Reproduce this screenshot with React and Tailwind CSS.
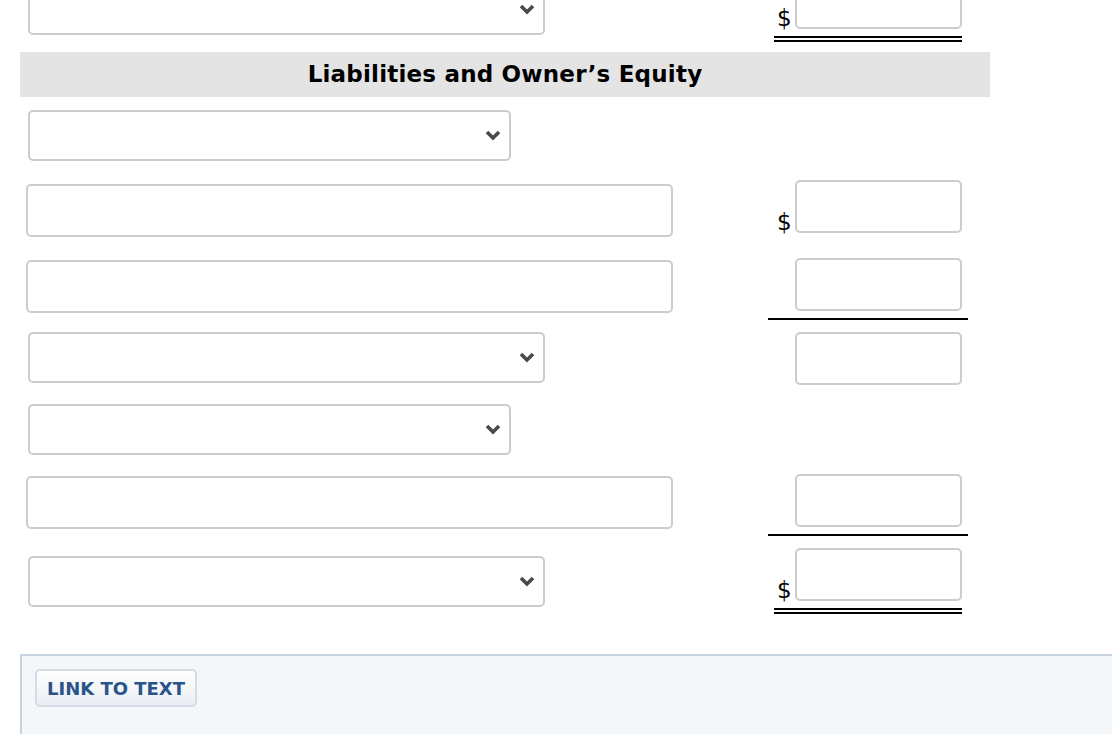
import React from "react";

const Chevron = () => (
  <svg width="16" height="11" viewBox="0 0 16 11" className="block">
    <polyline points="2,2 8,8 14,2" fill="none" stroke="#4a4a4a" strokeWidth="3.6" />
  </svg>
);

const Select = ({ wide, className = "" }) => (
  <div
    className={`flex h-[51px] items-center justify-end rounded-[5px] border-2 border-[#cccccc] bg-white pr-[8px] ${
      wide ? "w-[517px]" : "w-[483px]"
    } ${className}`}
  >
    <Chevron />
  </div>
);

const TextBox = ({ className = "" }) => (
  <div className={`h-[53px] w-[647px] rounded-[5px] border-2 border-[#cccccc] bg-white ${className}`} />
);

const Amount = ({ dollar }) => (
  <div className="flex items-end">
    <div className="mb-[-1px] w-[27px] pl-[9px] text-[23px] leading-[23px] text-black">
      {dollar ? "$" : ""}
    </div>
    <div className="h-[53px] w-[167px] rounded-[5px] border-2 border-[#cccccc] bg-white" />
  </div>
);

const DoubleLine = () => <div className="ml-[6px] mt-[7px] h-[6px] w-[188px] border-y-2 border-black" />;
const SingleLine = () => <div className="mt-[7px] h-[2px] w-[200px] bg-black" />;

export default function App() {
  return (
    <div
      className="relative flex h-[734px] w-[1112px] flex-col overflow-hidden bg-white"
      style={{ fontFamily: '"DejaVu Sans", Verdana, sans-serif' }}
    >
      {/* Row 1 */}
      <div className="-mt-[24px] flex items-start">
        <div className="w-[768px]">
          <Select wide className="ml-[28px] mt-[8px]" />
        </div>
        <div className="w-[200px]">
          <Amount dollar />
          <DoubleLine />
        </div>
      </div>

      {/* Header */}
      <div className="ml-[20px] mt-[10px] flex h-[45px] w-[970px] items-center justify-center bg-[#e4e4e4]">
        <span className="text-[23px] font-bold tracking-[0.2px] text-black">Liabilities and Owner’s Equity</span>
      </div>

      {/* Row 2 */}
      <div className="mt-[13px] flex">
        <Select className="ml-[28px]" />
      </div>

      {/* Row 3 */}
      <div className="mt-[19px] flex items-start">
        <div className="w-[768px]">
          <TextBox className="ml-[26px] mt-[4px]" />
        </div>
        <div className="w-[200px]">
          <Amount dollar />
        </div>
      </div>

      {/* Row 4 */}
      <div className="mt-[21px] flex items-start">
        <div className="w-[768px]">
          <TextBox className="ml-[26px] mt-[2px]" />
        </div>
        <div className="w-[200px]">
          <Amount />
          <SingleLine />
        </div>
      </div>

      {/* Row 5 */}
      <div className="mt-[12px] flex items-start">
        <div className="w-[768px]">
          <Select wide className="ml-[28px]" />
        </div>
        <div className="w-[200px]">
          <Amount />
        </div>
      </div>

      {/* Row 6 */}
      <div className="mt-[19px] flex">
        <Select className="ml-[28px]" />
      </div>

      {/* Row 7 */}
      <div className="mt-[19px] flex items-start">
        <div className="w-[768px]">
          <TextBox className="ml-[26px] mt-[2px]" />
        </div>
        <div className="w-[200px]">
          <Amount />
          <SingleLine />
        </div>
      </div>

      {/* Row 8 */}
      <div className="mt-[12px] flex items-start">
        <div className="w-[768px]">
          <Select wide className="ml-[28px] mt-[8px]" />
        </div>
        <div className="w-[200px]">
          <Amount dollar />
          <DoubleLine />
        </div>
      </div>

      {/* Bottom panel */}
      <div className="ml-[20px] mt-[40px] flex-1 border-l-2 border-t-2 border-[#c8d3e0] bg-[#f4f7fa]">
        <button className="ml-[13px] mt-[13px] flex h-[38px] w-[162px] items-center justify-center rounded-[5px] border-2 border-[#d3dbe4] bg-gradient-to-b from-white to-[#e9edf2] text-[18px] font-bold text-[#29538a]">
          LINK TO TEXT
        </button>
      </div>
    </div>
  );
}
